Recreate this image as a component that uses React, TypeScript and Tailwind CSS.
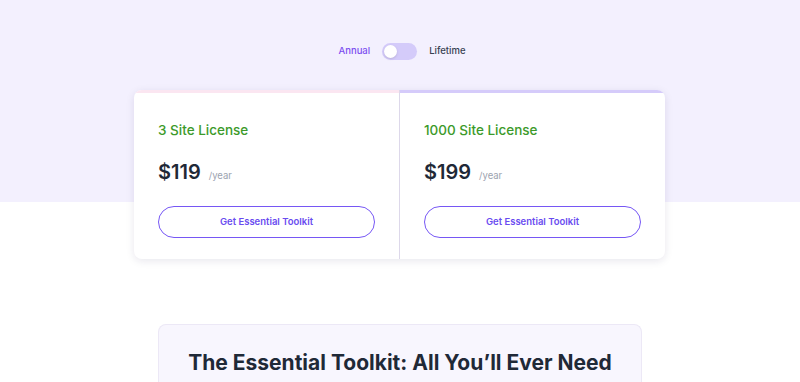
import { ReactNode } from 'react';

type Plan = { name: string; price: string; accent: string };

const plans: Plan[] = [
  { name: '3 Site License', price: '$119', accent: 'border-t-[#fbe6f1]' },
  { name: '1000 Site License', price: '$199', accent: 'border-t-[#d5cbfa]' },
];

function PlanCard({ plan, children }: { plan: Plan; children?: ReactNode }) {
  return (
    <div className={`flex flex-1 flex-col border-t-[3px] px-6 pb-[21px] pt-[27px] ${plan.accent}`}>
      <p className="text-[13.5px] font-medium leading-5 text-[#3c9a2a]">{plan.name}</p>
      <div className="mt-[18px] flex items-baseline gap-[8px]">
        <span className="text-[20px] font-semibold leading-7 text-[#1f2937]">{plan.price}</span>
        <span className="text-[9.5px] text-[#9ca3af]">/year</span>
      </div>
      <button className="mt-[20px] h-[32px] w-full rounded-full border-[1.5px] border-[#7657f4] text-[9.5px] font-semibold text-[#6a4cf0]">
        Get Essential Toolkit
      </button>
      {children}
    </div>
  );
}

export default function App() {
  return (
    <div className="min-h-[382px] overflow-hidden bg-[linear-gradient(to_bottom,#f3f0fe_202px,#ffffff_202px)] font-['Inter',sans-serif]">
      <div className="flex items-center justify-center gap-[12px] pt-[43px] pl-[4px]">
        <span className="text-[9.5px] font-medium text-[#7c4ff0]">Annual</span>
        <div className="flex h-[17px] w-[35px] items-center rounded-full bg-[#d4cbfa] px-[2px]">
          <div className="h-[13px] w-[13px] rounded-full bg-white shadow-sm" />
        </div>
        <span className="text-[9.5px] font-medium text-[#374151]">Lifetime</span>
      </div>

      <div className="ml-[134px] mt-[30px] flex w-[531px] overflow-hidden rounded-lg bg-white shadow-[0_2px_8px_rgba(30,20,80,0.10)]">
        <PlanCard plan={plans[0]} />
        <div className="w-px bg-[#ddd8ea]" />
        <PlanCard plan={plans[1]} />
      </div>

      <div className="ml-[158px] mt-[65px] w-[484px] rounded-t-lg border border-b-0 border-[#ece8f6] bg-[#f8f6fe] pt-[24px] pb-6">
        <h2 className="text-center text-[21px] font-bold leading-7 text-[#1f2937]">
          The Essential Toolkit: All You’ll Ever Need
        </h2>
      </div>
    </div>
  );
}
